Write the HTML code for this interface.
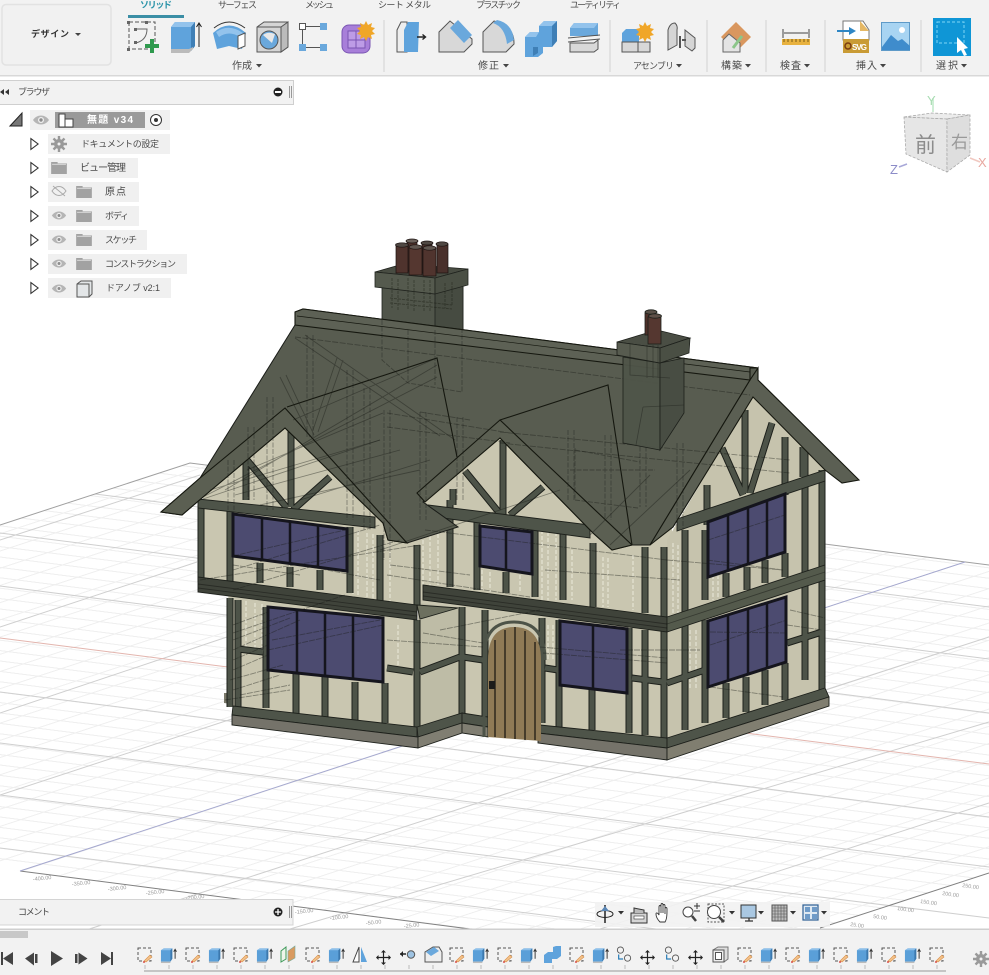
<!DOCTYPE html>
<html lang="ja"><head><meta charset="utf-8"><title>Design</title>
<style>
html,body{margin:0;padding:0;background:#fff;width:989px;height:975px;overflow:hidden}
svg{display:block;position:absolute;left:0;top:0}
text{font-family:"Liberation Sans","Noto Sans CJK JP",sans-serif;font-size:9px;fill:#4a4a4a}
.k{font-size:10px}
.rl{font-size:5.5px;fill:#9a9a9a}
</style></head><body>
<svg width="989" height="975" viewBox="0 0 989 975" xmlns="http://www.w3.org/2000/svg">
<defs>
<pattern id="gp" width="10" height="10" patternUnits="userSpaceOnUse" patternTransform="matrix(3.79 .48 -2.29 .75 20 871)">
<rect width=".6" height="10" fill="#efefef"/><rect width="10" height="1" fill="#efefef"/>
</pattern>
<symbol id="sk" viewBox="0 0 18 18"><rect x="2" y="2" width="13" height="13" fill="none" stroke="#555" stroke-width="1" stroke-dasharray="3 2"/><path d="M8 15l6-6 2 2-6 5z" fill="#f2c28a" stroke="#d98f4a" stroke-width=".6"/><circle cx="8" cy="16" r="1" fill="#d9534f"/></symbol>
<symbol id="ex" viewBox="0 0 18 18"><path d="M1 4l3-2h9v11l-2 3H1z" fill="#5a9fd8"/><path d="M11 4h-10l3-2h9z" fill="#8dc0ea"/><path d="M11 4l2-2v11l-2 3z" fill="#3c78ad"/><rect x="1" y="16" width="10" height="1.5" fill="#bbb"/><path d="M16 13V4m-1.500 1.500L16 3l1.500 2.500" stroke="#333" fill="none" stroke-width="1"/></symbol>
<symbol id="mv" viewBox="0 0 18 18"><path d="M9 1v16M1 9h16" stroke="#222" stroke-width="1.400"/><path d="M9 0l3 3H6zM9 18l3-3H6zM0 9l3-3v6zM18 9l-3-3v6z" fill="#222"/></symbol>
<symbol id="jn" viewBox="0 0 18 18"><circle cx="5" cy="4" r="3.500" fill="#f2f2f2" stroke="#555"/><circle cx="13" cy="13" r="3.500" fill="#f2f2f2" stroke="#555"/><path d="M3 9v5h5" fill="none" stroke="#2d7fb8" stroke-width="1.400"/></symbol>
<symbol id="eye" viewBox="0 0 18 12"><path d="M1 6c4-6 12-6 16 0-4 6-12 6-16 0z" fill="#b5b5b5"/><circle cx="9" cy="6" r="3" fill="#f0f0f0"/><circle cx="9" cy="6" r="1.700" fill="#8d8d8d"/></symbol>
<symbol id="fold" viewBox="0 0 17 13"><path d="M0 0h7v1.500h10V13H0z" fill="#a2a2a2"/><path d="M1 2.500h15" stroke="#ddd"/></symbol>
<symbol id="ar" viewBox="0 0 10 14"><path d="M1 1l8 6-8 6z" fill="#fff" stroke="#333" stroke-width="1.200"/></symbol>
<g id="tim">
<path d="M201 505V582M230 510V582M350 527V593M380 535V610M417 545V605"/>
<path d="M230 598V707M238 600V707M266 607V708M296 673V714M325 677V717M355 682V720M385 683V723M417 620V727"/>
<path d="M260 563V583M290 567V587M320 570V590"/>
<path d="M238 649L263 652M387 668L413 672M420 672L460 657M463 657L483 660"/>
<path d="M462 607V727M485 610V720"/>
<path d="M450 500V587M477 517V590M506 572V593M535 530V597M563 530V600M593 543V607M645 547V613M664 547V617"/>
<path d="M542 618V723M559 620V727M592 690V730M629 628V733M645 630V735M664 630V738"/>
<path d="M545 668L558 670M632 678L663 682M667 683L705 670M787 643L822 632"/>
<path d="M685 530V613M685 625V730M705 530V600M705 620V723"/>
<path d="M726 683V718M746 677V712M765 670V705M785 663V700M726 573V597M747 567V590M765 560V583M785 553V577"/>
<path d="M805 450V680M822 470V690M785 437V495M803 447V477"/>
<path d="M291 430V507M247 460L287 508M330 477L293 510M246 462V500"/>
<path d="M503 440V515M465 471L501 515M543 487L510 515M453 489V505"/>
<path d="M745 410V493M722 448L743 495M772 423L750 493M707 485V525"/>
</g>
</defs>

<rect width="989" height="975" fill="#fff"/>

<!-- grid -->
<polygon points="190,463 989,565 989,873 820,928 470,929 20,871 0,868 0,525" fill="url(#gp)"/>
<g stroke="#cfcfcf" stroke-width="1" fill="none">
<path d="M95 494L989 607M0 533L989 659M0 586L989 713M0 692L989 817M0 743L989 867M0 795L989 918M0 848L989 970"/>
<path d="M0 540L200 475M0 627L197 562M0 713L227 637M0 795L250 713M0 958L989 637M290 929L989 722M600 929L989 803M825 690L989 637"/>
</g>
<path d="M0 525L190 463L989 565" stroke="#a0a0a0" fill="none"/>
<path d="M20 871L470 929M820 928L989 873" stroke="#808080" fill="none"/>
<path d="M0 638L989 764" stroke="#e3b5ae" fill="none"/>
<path d="M20 871L965 562" stroke="#a5a8cf" fill="none"/>
<g>
<text class="rl" transform="translate(33 881) rotate(-6)">-400.00</text>
<text class="rl" transform="translate(72 886) rotate(-6)">-350.00</text>
<text class="rl" transform="translate(108 891) rotate(-6)">-300.00</text>
<text class="rl" transform="translate(146 895) rotate(-6)">-250.00</text>
<text class="rl" transform="translate(186 900) rotate(-6)">-200.00</text>
<text class="rl" transform="translate(295 914) rotate(-6)">-150.00</text>
<text class="rl" transform="translate(330 920) rotate(-6)">-100.00</text>
<text class="rl" transform="translate(366 925) rotate(-6)">-50.00</text>
<text class="rl" transform="translate(404 928) rotate(-6)">-25.00</text>
<text class="rl" transform="translate(962 887) rotate(8)">250.00</text>
<text class="rl" transform="translate(942 895) rotate(8)">200.00</text>
<text class="rl" transform="translate(920 903) rotate(8)">150.00</text>
<text class="rl" transform="translate(897 910) rotate(8)">100.00</text>
<text class="rl" transform="translate(873 918) rotate(8)">50.00</text>
<text class="rl" transform="translate(850 926) rotate(8)">25.00</text>
</g>

<!-- chimney 1 -->
<g stroke="#20231e" stroke-width=".8">
<polygon points="382,285 435,292 463,285 463,332 435,330 382,322" fill="#50554a"/>
<polygon points="435,292 463,285 463,332 435,330" fill="#464b41"/>
<polygon points="375,272 403,264 468,269 435,278" fill="#484c42"/>
<polygon points="375,272 435,278 435,294 375,287" fill="#555a4e"/>
<polygon points="435,278 468,269 468,285 435,294" fill="#4a4f44"/>
</g>
<path d="M392 278V308M398 279V310M408 278V310M414 280V311M424 280V311M430 280V312M445 283V308M452 282V306M390 298L452 305M390 303L452 309" stroke="#16180f" stroke-opacity=".4" stroke-dasharray="3 1" fill="none"/>
<g stroke="#1b1210" stroke-width=".7">
<rect x="407" y="241" width="10" height="30" fill="#4d322c"/>
<rect x="422" y="243" width="10" height="30" fill="#49302a"/>
<rect x="396" y="244" width="12" height="29" fill="#4f332d"/>
<rect x="437" y="244" width="11" height="29" fill="#49302b"/>
<rect x="409" y="247" width="13" height="28" fill="#553730"/>
<rect x="423" y="248" width="13" height="28" fill="#50342e"/>
<ellipse cx="412" cy="241" rx="6" ry="2" fill="#6b625c"/><ellipse cx="427" cy="243" rx="6" ry="2" fill="#4f4843"/>
<ellipse cx="402" cy="245" rx="6.500" ry="2.200" fill="#4f4843"/><ellipse cx="442" cy="244" rx="6" ry="2.200" fill="#4f4843"/>
<ellipse cx="415.500" cy="247" rx="6.500" ry="2.200" fill="#5f5650"/><ellipse cx="429.500" cy="248" rx="6.500" ry="2.200" fill="#5f5650"/>
</g>

<!-- walls -->
<g fill="#c9c6b0" stroke="none">
<polygon points="203,495 430,505 430,612 203,590"/>
<polygon points="228,590 418,620 418,730 233,712"/>
<polygon points="420,500 672,525 672,745 540,730 462,720 420,720"/>
<polygon points="418,603 462,608 462,720 418,735" fill="#bebca6"/>
<polygon points="667,540 748,403 753,397 825,470 825,690 667,745" fill="#c6c3ad"/>
<polygon points="285,428 203,497 383,523"/>
<polygon points="500,438 423,502 593,533"/>
<polygon points="224,693 232,693 232,704 224,703" fill="#7b7a6b"/>
</g>
<!-- white ghost dashes -->
<path d="M353 530V597M358 531V597M367 533V598M373 534V599M240 600V647M246 601V648M255 603V648M262 604V649M390 540V610M423 510V600M430 512V600M542 530V600M548 532V600M556 532V600M562 534V600M572 550V600M603 557V607M608 558V607M633 555V610M673 543V613M678 545V613M713 575V600M718 575V600M398 625V665M690 630V690M696 630V690M548 625V660M553 625V660M438 510V585M482 570V590M490 572V592M520 575V593" stroke="#ebe9da" stroke-width="1" stroke-dasharray="4 2" fill="none"/>
<!-- timbers -->
<use href="#tim" fill="none" stroke="#1d201b" stroke-width="7"/>
<use href="#tim" fill="none" stroke="#4d5348" stroke-width="5"/>

<!-- beams -->
<g stroke="#1d201b" stroke-width=".9" fill="#4e5449">
<polygon points="198,499 375,517 375,528 198,508"/>
<polygon points="428,505 590,525 590,538 428,516"/>
<polygon points="677,519 825,470 825,481 677,531"/>
<polygon points="417,605 458,608 420,619" fill="#6d705f"/>
<polygon points="198,577 417,605 417,620 198,592" fill="#3f433a"/>
<polygon points="423,585 667,617 667,632 423,600" fill="#3f433a"/>
<polygon points="667,617 825,565 825,580 667,632" fill="#545a4c"/>
<polygon points="233,706 417,727 417,737 232,715"/>
<polygon points="417,727 462,713 462,723 418,737"/>
<polygon points="462,713 488,717 488,727 462,723"/>
<polygon points="540,725 667,738 667,748 538,733"/>
<polygon points="667,738 825,688 829,697 667,748"/>
<polygon points="232,715 418,737 418,748 232,725" fill="#75736a"/>
<polygon points="418,737 462,723 462,733 418,748" fill="#807e72"/>
<polygon points="462,723 488,727 488,737 462,733" fill="#807e72"/>
<polygon points="538,733 667,748 667,760 538,743" fill="#75736a"/>
<polygon points="667,748 829,697 829,706 667,760" fill="#807e70"/>
</g>

<!-- windows -->
<g fill="#4c4b70" stroke="#15151d" stroke-width="3">
<polygon points="233,514 347,529 347,571 233,556"/>
<polygon points="268,607 383,618 383,682 268,670"/>
<polygon points="480,526 532,532 532,574 480,566"/>
<polygon points="560,621 627,629 627,693 560,685"/>
<polygon points="708,522 785,494 785,552 708,577"/>
<polygon points="708,621 786,597 786,662 708,687"/>
<path d="M262 518V560M290 522V564M318 525V568M297 610V673M325 613V676M353 615V679M506 529V570M593 625V689M728 515V570M748 507V563M767 501V557M728 614V680M748 608V674M767 603V668" fill="none" stroke-width="2.500"/>
</g>

<!-- door -->
<path d="M488 737V660Q488 627 514 627Q541 627 541 660V741Z" fill="#8f7a56"/>
<path d="M484 737V658Q484 622 514 622Q545 622 545 660" fill="none" stroke="#4d5348" stroke-width="3"/>
<path d="M495 737V640M505 738V630M515 739V627M525 740V631M535 740V642" stroke="#16140f" stroke-width="1.200" fill="none"/>
<rect x="489" y="681" width="6" height="8" fill="#1d1c1a"/>

<!-- roof -->
<polygon points="295,312 303,309 758,368 758,380 750,380 650,545 632,545 612,550 593,533 500,438 423,502 458,527 407,543 388,540 383,523 285,428 203,497 182,515 161,512 200,478 295,325" fill="#585c50" stroke="#1a1c18" stroke-width="1"/>

<!-- gable planes and fascias -->
<g stroke="#15170f" stroke-width="1.100">
<path d="M287,407L437,358L457,457" fill="none"/>
<path d="M500,420L608,385L632,545" fill="none"/>
<polygon points="285,408 200,478 161,512 182,515 203,497 285,428 383,523 388,540 407,543" fill="#5b5f53" fill-opacity=".92"/>
<polygon points="500,420 417,493 425,502 500,438 593,533 612,550 632,545" fill="#5b5f53" fill-opacity=".92"/>
<polygon points="758,368 758,380 859,480 842,483 825,470 753,397 673,527 650,545 750,380" fill="#5b5f53"/>
<polygon points="295,312 303,309 758,368 750,368 750,380 295,325" fill="#5d6155"/>
<path d="M297 316L750 372" fill="none" stroke-width=".7"/>
</g>

<!-- ghost structure showing through -->
<g fill="none" stroke="#1a1c18" stroke-opacity=".42" stroke-width=".9">
<path stroke-dasharray="5 1.500" d="M307 335V437M313 335V437M347 370V520M353 370V520M364 388V530M370 388V530M384 410V560M390 410V560M420 412V520M426 412V520M457 417V500M463 417V500M267 397V510M273 397V510M248 427V500M254 427V500M228 460V510M234 460V510"/>
<path d="M280 377L310 437M286 375L314 435M337 358L313 430M343 360L318 432M203 497L437 377M225 490L437 365M247 470L383 413M293 420L437 358M295 338L440 436M305 335L455 440M210 490L380 440M235 495L400 450M260 505L420 470M300 500L430 460"/>
<path stroke-dasharray="6 1.500" d="M387 413L510 433M387 427L510 443M500 432L790 460M500 443L790 473M295 337L750 395M420 412L470 420"/>
<path stroke-dasharray="5 1.500" d="M382 320V360L408 383L462 392V330M408 330V383M435 330V385"/>
<path stroke-dasharray="5 1.500" d="M568 430V500M574 430V500M605 435V520M611 435V520M640 440V507M646 440V507M677 443V530M683 443V530M575 448V500L638 508M575 450L640 462M570 470L655 470"/>
<path d="M380 550L560 490M590 535L650 475M610 545L690 470M200 500L380 440"/>
<path stroke-dasharray="6 1" d="M233 570L380 525M233 590L400 540M233 650L300 620M233 640L290 618M240 695L290 685M230 680L283 665M233 633L345 595M233 660L268 645M233 670L268 655M233 625L268 612M233 690L280 675M225 700L290 690M387 575L530 597M387 640L483 647M423 633L483 643M540 647L667 658M543 653L667 663M667 560L783 570M707 560L783 570M787 625L822 630M710 687L783 697M620 650L700 650M425 530L667 560M200 580L420 545M440 630L540 610M233 565L300 575M300 565L380 580M390 565L470 575M545 570L680 580M710 632L787 633M710 645L787 620M708 540L785 515M233 556L345 530M268 650L383 625M272 640L380 620M790 610L825 618"/>
<path stroke="#000" stroke-opacity=".35" d="M198 584L417 612M198 588L417 616M423 592L667 624M423 596L667 628M667 624L825 572"/>
</g>

<!-- chimney 2 -->
<g stroke="#1d201b" stroke-width=".8">
<polygon points="623,357 660,363 660,450 623,443" fill="#4f5449" fill-opacity=".95"/>
<polygon points="660,363 684,358 684,413 660,450" fill="#484d43"/>
<polygon points="617,342 657,330 690,338 660,348" fill="#4a4e44"/>
<polygon points="617,342 660,348 660,363 617,355" fill="#575b4f"/>
<polygon points="660,348 690,338 689,353 660,363" fill="#4a4f44"/>
<path d="M630 343V375L670 378M643 407L684 405M636 445L643 407M647 345V378M653 345V378M658 345V378" fill="none" stroke-opacity=".45"/>
<rect x="645" y="313" width="7" height="22" fill="#4e3029"/>
<rect x="648" y="317" width="13" height="27" fill="#553730"/>
<ellipse cx="651" cy="312" rx="6" ry="2.200" fill="#5a5048"/>
<ellipse cx="655" cy="316" rx="6.500" ry="2.200" fill="#5f5048"/>
</g>

<!-- Top toolbar -->
<rect x="0" y="0" width="989" height="76" fill="#f2f2f2"/>
<rect x="0" y="75" width="989" height="1.500" fill="#d8d8d8"/>
<rect x="2" y="4.500" width="109" height="60.500" rx="4" fill="#f1f1f1" stroke="#e2e2e2" stroke-width="1.500"/>
<text x="31" y="37" textLength="38" style="font-weight:700;fill:#333">デザイン</text>
<path d="M75 33h6l-3 3z" fill="#444"/>
<text x="140" y="8" textLength="32" style="font-weight:700;fill:#2a93a8">ソリッド</text>
<rect x="128" y="15" width="56" height="3" fill="#3b8ea5"/>
<text x="218" y="8" textLength="39">サーフェス</text>
<text x="305" y="8" textLength="29">メッシュ</text>
<text x="378" y="8" textLength="53">シート メタル</text>
<text x="476" y="8" textLength="45">プラスチック</text>
<text x="570" y="8" textLength="51">ユーティリティ</text>
<text class="k" x="232" y="69" textLength="20">作成</text><path d="M256 64h6l-3 3.500z" fill="#444"/>
<text class="k" x="478" y="69" textLength="21">修正</text><path d="M503 64h6l-3 3.500z" fill="#444"/>
<text x="633" y="69" textLength="41">アセンブリ</text><path d="M676 64h6l-3 3.500z" fill="#444"/>
<text class="k" x="721" y="69" textLength="21">構築</text><path d="M745 64h6l-3 3.500z" fill="#444"/>
<text class="k" x="780" y="69" textLength="21">検査</text><path d="M804 64h6l-3 3.500z" fill="#444"/>
<text class="k" x="856" y="69" textLength="21">挿入</text><path d="M880 64h6l-3 3.500z" fill="#444"/>
<text class="k" x="936" y="69" textLength="22">選択</text><path d="M961 64h6l-3 3.500z" fill="#444"/>
<path d="M384 20V72M610 20V72M707 20V72M766 20V72M825 20V72M921 20V72" stroke="#dcdcdc" stroke-width="1.500"/>

<!-- 1 sketch -->
<rect x="129" y="22" width="26" height="27" fill="none" stroke="#555" stroke-dasharray="4 2"/>
<rect x="127" y="48" width="3" height="3" fill="#666"/><rect x="127" y="21" width="3" height="3" fill="#666"/><rect x="145" y="21" width="3" height="3" fill="#666"/>
<path d="M135 29h12q0 11-11 14" fill="none" stroke="#666"/><rect x="134" y="28" width="3" height="3" fill="#666"/><rect x="134" y="41" width="3" height="3" fill="#666"/>
<path d="M150 39h4v5h5v4h-5v5h-4v-5h-5v-4h5z" fill="#2f9a4e"/>
<!-- 2 extrude -->
<path d="M171 27l4-5h20v24l-4 5h-20z" fill="#5fa3dc"/><path d="M171 27l4-5h20l-4 5z" fill="#93c3ec"/><path d="M191 27l4-5v24l-4 5z" fill="#3f7fb6"/><path d="M171 49h18l4-2v2l-4 4h-18z" fill="#bbb"/>
<path d="M199 47V24m-2.500 3l2.500-4 2.500 4" stroke="#222" fill="none"/>
<!-- 3 revolve -->
<path d="M213 33q16-15 33 0l-4 16-13-3-12 3z" fill="#5fa3dc"/><path d="M216 32q13-9 27 1l-3 4q-11-7-21 0z" fill="#93c3ec"/><path d="M238 36l7-3v13l-7 3z" fill="#fff" stroke="#555"/>
<path d="M214 28q15-12 31 0" fill="none" stroke="#333"/>
<!-- 4 hole -->
<path d="M257 27l7-5h24v25l-7 5h-24z" fill="#d5d5d5" stroke="#555"/><path d="M281 27l7-5v25l-7 5zM257 27h24" fill="#bbb" stroke="#555"/>
<circle cx="269" cy="40" r="9" fill="#6aa8dc" stroke="#555"/><path d="M263 35q5-4 12-1l-3 9z" fill="#e8e8e8"/>
<!-- 5 pattern -->
<rect x="299.500" y="23.500" width="6" height="6" fill="#fff" stroke="#555"/><rect x="320" y="23" width="7" height="7" fill="#6aa8dc"/><rect x="299" y="44" width="7" height="7" fill="#6aa8dc"/><rect x="320" y="44" width="7" height="7" fill="#6aa8dc"/>
<path d="M306 26.500h14M302.500 30v14M306 47.500h14" stroke="#555"/>
<!-- 6 form -->
<rect x="342" y="25" width="28" height="28" rx="7" fill="#a87fd9" stroke="#7a55b3"/><path d="M348 31h17v17h-17zM356 31v17M348 40h17" fill="#bd9ce6" stroke="#7a55b3"/>
<path d="M366 21l2 4 4-2-1 4 4 1-3 3 3 3-4 1 1 4-4-2-2 4-2-4-4 2 1-4-4-1 3-3-3-3 4-1-1-4 4 2z" fill="#f0a628"/>
<!-- 7 press pull -->
<path d="M397 52V30l4-8h6v30z" fill="#eee" stroke="#555"/><path d="M404 52V30l4-8h11l-1 30z" fill="#5fa3dc"/><path d="M417 37h8m-2.500-2.500l3 2.500-3 2.500" stroke="#222" fill="none" stroke-width="1.400"/>
<!-- 8 fillet -->
<path d="M439 32l11-11 22 18v5l-8 8h-25z" fill="#d8d8d8" stroke="#555"/><path d="M450 28l8-8 14 15-8 8z" fill="#6aa8dc"/>
<!-- 9 chamfer -->
<path d="M483 32l11-11q20 5 20 22v1l-8 8h-23z" fill="#d8d8d8" stroke="#555"/><path d="M493 23l4-3q15 3 17 20l-7 4q-2-17-14-21z" fill="#6aa8dc"/>
<!-- 10 combine -->
<path d="M525 37l5-5h9v-6l5-5h13v20l-5 6h-9v6l-5 4h-13z" fill="#5fa3dc"/><path d="M539 26l5-5h13l-5 5zM525 37l5-5h9l-3 5z" fill="#93c3ec"/><path d="M552 26l5-5v20l-5 6z" fill="#3f7fb6"/><path d="M538 47v6l-5 3v-9z" fill="#3f7fb6"/>
<!-- 11 offset -->
<path d="M570 28l4-5h24v13h-28z" fill="#6aa8dc"/><path d="M570 28h24l4-5h-24z" fill="#93c3ec"/><path d="M568 38l32-3M568 42l32-3" stroke="#555" fill="none"/><path d="M570 43h24l4-3v9l-4 3h-24z" fill="#d8d8d8" stroke="#555"/>
<!-- 12 assembly -->
<path d="M622 33l4-4h13v13h-17z" fill="#5fa3dc"/><path d="M622 42h16v10h-16zM638 42h12v10h-12z" fill="#d8d8d8" stroke="#555"/>
<path d="M645 22l2 4 4-2-1 4 4 1-3 3 3 3-4 1 1 4-4-2-2 4-2-4-4 2 1-4-4-1 3-3-3-3 4-1-1-4 4 2z" fill="#f0a628"/>
<!-- 13 joint -->
<path d="M668 50V30q2-7 7-7 3 3 2 7v15zM685 30l10 8v10l-3 3-7-5z" fill="#d5d5d5" stroke="#555"/><path d="M680 36v12M682 40h4" stroke="#555" stroke-width="2"/>
<!-- 14 construct -->
<path d="M736 22l15 15-15 15-15-15z" fill="#d9975f"/><path d="M723 40l6-6 11 9v9h-17z" fill="#e4e4e4" stroke="#666"/><path d="M733 48l9-12" stroke="#8cc68a" stroke-width="3"/>
<!-- 15 measure -->
<rect x="782" y="39" width="28" height="6" fill="#e8b23f"/><path d="M784 39v3M788 39v3M792 39v3M796 39v3M800 39v3M804 39v3M808 39v3" stroke="#7a5c15"/><path d="M783 29v9M809 29v9M784 33h24" stroke="#444"/>
<!-- 16 svg insert -->
<path d="M843 21h20l6 9v10h-26z" fill="#fff" stroke="#777"/><path d="M860 21l9 10h-9z" fill="#e5b865"/><rect x="843" y="39" width="26" height="14" fill="#c99b35"/>
<text x="852" y="50" textLength="15" style="font-size:8px;font-weight:700;fill:#fff">SVG</text><circle cx="848" cy="46" r="3" fill="none" stroke="#7a3b10" stroke-width="1.500"/>
<path d="M837 30h12v-3l7 4-7 4v-3h-12z" fill="#2f86c4"/>
<!-- 17 image -->
<rect x="881.500" y="22.500" width="28" height="28" fill="#a8d4f2" stroke="#5e9ac8"/><path d="M882 47l9-12 7 6 4-2 8 7v4h-28z" fill="#3f8ccc"/><circle cx="902" cy="30" r="3" fill="#fff"/>
<!-- 18 select -->
<rect x="933" y="18" width="38" height="38" fill="#0f96d6"/><rect x="937" y="22" width="27" height="21" fill="none" stroke="#7fd6f5" stroke-dasharray="3 2"/><path d="M957 37l11 11-4 1 3 6-3 1-3-6-4 3z" fill="#fff"/>

<!-- Browser panel -->
<rect x="-1" y="80.500" width="294.500" height="24" fill="#f2f2f2" stroke="#cfcfcf"/>
<path d="M0 92l4-3v6zM5 92l4-3v6z" fill="#333"/>
<text x="18" y="95" textLength="32">ブラウザ</text>
<circle cx="278" cy="92" r="4.500" fill="#222"/><rect x="275" y="91" width="6" height="2" fill="#fff"/>
<path d="M289.500 86v12M291.500 86v12" stroke="#999"/>
<path d="M10 126L22 113V126Z" fill="#777" stroke="#222"/>
<rect x="30" y="110" width="140" height="20" fill="#f0f0f0"/>
<use href="#eye" x="32" y="114" width="18" height="12"/>
<rect x="55" y="112" width="90" height="16" fill="#9a9a9a"/>
<path d="M59 127V114h6v5h8v8z" fill="#fff" stroke="#444"/><path d="M65 119v8" stroke="#444"/>
<text class="k" x="87" y="123" textLength="46" style="fill:#fff;font-weight:700">無題 v34</text>
<circle cx="156" cy="120" r="5.500" fill="#fff" stroke="#333"/><circle cx="156" cy="120" r="2" fill="#333"/>

<g>
<rect x="48" y="134" width="122" height="20" fill="#f0f0f0"/>
<rect x="48" y="158" width="90" height="20" fill="#f0f0f0"/>
<rect x="48" y="182" width="91" height="20" fill="#f0f0f0"/>
<rect x="48" y="206" width="91" height="20" fill="#f0f0f0"/>
<rect x="48" y="230" width="99" height="20" fill="#f0f0f0"/>
<rect x="48" y="254" width="139" height="20" fill="#f0f0f0"/>
<rect x="48" y="278" width="123" height="20" fill="#f0f0f0"/>
<use href="#ar" x="30" y="137" width="9" height="14"/>
<use href="#ar" x="30" y="161" width="9" height="14"/>
<use href="#ar" x="30" y="185" width="9" height="14"/>
<use href="#ar" x="30" y="209" width="9" height="14"/>
<use href="#ar" x="30" y="233" width="9" height="14"/>
<use href="#ar" x="30" y="257" width="9" height="14"/>
<use href="#ar" x="30" y="281" width="9" height="14"/>
<circle cx="59" cy="144" r="5" fill="#999"/><path d="M59 136v16M51 144h16M53.500 138.500l11 11M64.500 138.500l-11 11" stroke="#999" stroke-width="2.400"/><circle cx="59" cy="144" r="1.500" fill="#f0f0f0"/>
<use href="#fold" x="51" y="162" width="16" height="12"/>
<path d="M52 191c4-6 10-6 14 0-4 6-10 6-14 0zM53 186l12 10" fill="none" stroke="#aaa"/>
<use href="#fold" x="76" y="186" width="16" height="12"/>
<use href="#eye" x="51" y="210" width="16" height="11"/><use href="#fold" x="76" y="210" width="16" height="12"/>
<use href="#eye" x="51" y="234" width="16" height="11"/><use href="#fold" x="76" y="234" width="16" height="12"/>
<use href="#eye" x="51" y="258" width="16" height="11"/><use href="#fold" x="76" y="258" width="16" height="12"/>
<use href="#eye" x="51" y="283" width="16" height="11"/>
<path d="M77 284l4-3h11v13l-3 3h-12z" fill="#e3e6e8" stroke="#555"/><path d="M77 284h12v13" fill="none" stroke="#555"/>
<text x="81" y="147" textLength="78">ドキュメントの設定</text>
<text class="k" x="80" y="171" textLength="46">ビュー管理</text>
<text class="k" x="105" y="195" textLength="21">原点</text>
<text x="105" y="219" textLength="24">ボディ</text>
<text x="105" y="243" textLength="32">スケッチ</text>
<text x="105" y="267" textLength="71">コンストラクション</text>
<text x="106" y="291" textLength="54">ドアノブ v2:1</text>
</g>

<!-- View cube -->
<path d="M933 112V98" stroke="#bfe8c8" stroke-width="1.500"/>
<text x="927" y="105" style="font-size:13px;fill:#a8dcb2">Y</text>
<polygon points="904,117 932,113 970,115 947,119" fill="#ececec" stroke="#aaa" stroke-dasharray="3 1.500" stroke-width=".8"/>
<polygon points="904,117 947,119 947,172 906,154" fill="#e6e6e6" stroke="#aaa" stroke-dasharray="3 1.500" stroke-width=".8"/>
<polygon points="947,119 970,115 970,155 947,172" fill="#dedede" stroke="#aaa" stroke-dasharray="3 1.500" stroke-width=".8"/>
<text x="915" y="152" style="font-size:21px;fill:#8c8c8c">前</text>
<text x="951" y="148" style="font-size:17px;fill:#999">右</text>
<path d="M970 158l10 4" stroke="#f0c8c0" stroke-width="1.500"/><text x="978" y="167" style="font-size:13px;fill:#e8a8a0">X</text>
<path d="M899 167l8-3" stroke="#a8a8d8" stroke-width="1.500"/><text x="890" y="174" style="font-size:13px;fill:#8c8cc8">Z</text>

<!-- Comment panel -->
<rect x="-1" y="899.500" width="294" height="25.500" fill="#f2f2f2" stroke="#d4d4d4"/>
<text x="18" y="915" textLength="32">コメント</text>
<circle cx="278" cy="912" r="4.500" fill="#222"/><path d="M275 912h6M278 909v6" stroke="#fff" stroke-width="1.300"/>
<path d="M289.500 906v12M291.500 906v12" stroke="#999"/>

<!-- nav bar -->
<rect x="595" y="902" width="235" height="25" fill="#f2f2f2" fill-opacity=".9"/>
<ellipse cx="605" cy="914" rx="8" ry="3.500" fill="none" stroke="#222"/><path d="M605 905v18" stroke="#222" stroke-width="1.500"/><path d="M601 911l4-5 4 5z" fill="#5a86b5"/>
<path d="M618 911h6l-3 3.500z" fill="#333"/>
<rect x="631" y="913" width="16" height="10" fill="#d5d5d5" stroke="#333"/><rect x="634" y="916" width="10" height="3" fill="#fff" stroke="#333" stroke-width=".6"/><path d="M634 913v-5l10 2v3" fill="#bbb" stroke="#333"/>
<path d="M660 922c-3-3-4-6-4-8 0-2 2-1 3 1v-8c0-2 2-2 2 0v6-8c0-2 2-2 2 0v8-7c0-2 2-2 2 0v8-5c0-2 2-2 2 0 0 5 0 10-2 13z" fill="#fff" stroke="#333" stroke-width=".9"/>
<circle cx="688" cy="912" r="5" fill="#fff" stroke="#444"/><path d="M692 916l4 5" stroke="#444" stroke-width="2.500"/><path d="M694 906h6M697 903v6M694 911h6" stroke="#333"/>
<rect x="708" y="904" width="16" height="18" fill="none" stroke="#555" stroke-dasharray="2 1.500"/><circle cx="714" cy="912" r="6.500" fill="#fff" stroke="#444"/><path d="M719 917l5 5" stroke="#444" stroke-width="2.500"/>
<path d="M729 911h6l-3 3.500z" fill="#333"/>
<rect x="741" y="905" width="15" height="13" fill="#aac8e2" stroke="#333"/><path d="M745 921h8M749 918v3" stroke="#333" stroke-width="1.300"/>
<path d="M758 911h6l-3 3.500z" fill="#333"/>
<rect x="772" y="905" width="15" height="16" fill="#bbb" stroke="#555"/><path d="M775 905v16M778 905v16M781 905v16M784 905v16M772 908h15M772 911h15M772 914h15M772 917h15" stroke="#555" stroke-width=".6"/>
<path d="M790 911h6l-3 3.500z" fill="#333"/>
<rect x="803" y="905" width="15" height="15" fill="#dfe9f2" stroke="#2e5f94" stroke-width="1.200"/><path d="M805 907h5v5h-5zM812 907h5v5h-5zM805 914h5v5h-5zM812 914h5v5h-5z" fill="#6f9bc8"/>
<path d="M821 911h6l-3 3.500z" fill="#333"/>

<!-- Bottom timeline -->
<rect x="0" y="929" width="989" height="46" fill="#f2f2f2"/>
<rect x="0" y="928.500" width="989" height="1.500" fill="#cfcfcf"/>
<rect x="0" y="931" width="28" height="7" fill="#c8c8c8"/>
<g fill="#444">
<path d="M1 952h2v13H1zM3 958.500l10-6.500v13z"/>
<path d="M25 958.500l9-6v13zM35 954h2.500v9H35z"/>
<path d="M51 951l12 7.500-12 7.500z"/>
<path d="M75 954h2.500v9H75zM78.500 952.500l9 6-9 6z"/>
<path d="M101 952l10 6.500-10 6.500zM111 952h2v13h-2z"/>
</g>
<rect x="144" y="970" width="802" height="2" fill="#c5c5c5"/>
<path d="M145 965v4M169 965v4M193 965v4M217 965v4M241 965v4M265 965v4M289 965v4M313 965v4M337 965v4M361 965v4M385 965v4M409 965v4M433 965v4M457 965v4M481 965v4M505 965v4M529 965v4M553 965v4M577 965v4M601 965v4M625 965v4M649 965v4M673 965v4M697 965v4M721 965v4M745 965v4M769 965v4M793 965v4M817 965v4M841 965v4M865 965v4M889 965v4M913 965v4M937 965v4" stroke="#bbb"/>
<g>
<use href="#sk" x="136" y="946" width="18" height="18"/>
<use href="#ex" x="160" y="946" width="17" height="18"/>
<use href="#sk" x="184" y="946" width="18" height="18"/>
<use href="#ex" x="208" y="946" width="17" height="18"/>
<use href="#sk" x="232" y="946" width="18" height="18"/>
<use href="#ex" x="256" y="946" width="17" height="18"/>
<path d="M281 962V951l5-4v12zM288 962V951l7-5v12z" fill="#d99a5f" stroke="#7a9" stroke-width=".6"/><path d="M281 962V951l5-4v12z" fill="#eef5ea" stroke="#3f9a5a"/>
<use href="#sk" x="304" y="946" width="18" height="18"/>
<use href="#ex" x="328" y="946" width="17" height="18"/>
<path d="M353 962l6-15v15zM361 962v-15l6 15z" fill="#5fa3dc"/><path d="M353 962l6-15v15z" fill="#fff" stroke="#444"/>
<use href="#mv" x="376" y="950" width="15" height="15"/>
<path d="M400 954h6" stroke="#222" stroke-width="1.500"/><path d="M400 954l3-3v6z" fill="#222"/><circle cx="411" cy="954.500" r="3.700" fill="#9ec3e2" stroke="#555"/>
<path d="M425 962v-10l8-5h6l3 5v10z" fill="#eee" stroke="#555"/><path d="M426 952l8-5 5 4-8 5z" fill="#6aa8dc"/>
<use href="#sk" x="448" y="946" width="18" height="18"/>
<use href="#ex" x="472" y="946" width="17" height="18"/>
<use href="#sk" x="496" y="946" width="18" height="18"/>
<use href="#ex" x="520" y="946" width="17" height="18"/>
<path d="M544 955l4-3h5v-5l3-1h5v10l-4 3h-5v4h-8z" fill="#5fa3dc"/>
<use href="#sk" x="568" y="946" width="18" height="18"/>
<use href="#ex" x="592" y="946" width="17" height="18"/>
<use href="#jn" x="616" y="946" width="16" height="17"/>
<use href="#mv" x="640" y="950" width="15" height="15"/>
<use href="#jn" x="664" y="946" width="16" height="17"/>
<use href="#mv" x="688" y="950" width="15" height="15"/>
<path d="M713 950l5-3h10v12l-4 3" fill="#ddd" stroke="#777"/><rect x="713" y="950" width="11" height="12" fill="#eee" stroke="#555"/><rect x="715.500" y="952.500" width="6" height="7" fill="#fff" stroke="#555"/>
<use href="#sk" x="736" y="946" width="18" height="18"/>
<use href="#ex" x="760" y="946" width="17" height="18"/>
<use href="#sk" x="784" y="946" width="18" height="18"/>
<use href="#ex" x="808" y="946" width="17" height="18"/>
<use href="#sk" x="832" y="946" width="18" height="18"/>
<use href="#ex" x="856" y="946" width="17" height="18"/>
<use href="#sk" x="880" y="946" width="18" height="18"/>
<use href="#ex" x="904" y="946" width="17" height="18"/>
<use href="#sk" x="928" y="946" width="18" height="18"/>
</g>
<circle cx="981" cy="959" r="5" fill="#9a9a9a"/><path d="M981 951v16M973 959h16M975.500 953.500l11 11M986.500 953.500l-11 11" stroke="#9a9a9a" stroke-width="2.400"/><circle cx="981" cy="959" r="1.500" fill="#f2f2f2"/>
</svg>
</body></html>
